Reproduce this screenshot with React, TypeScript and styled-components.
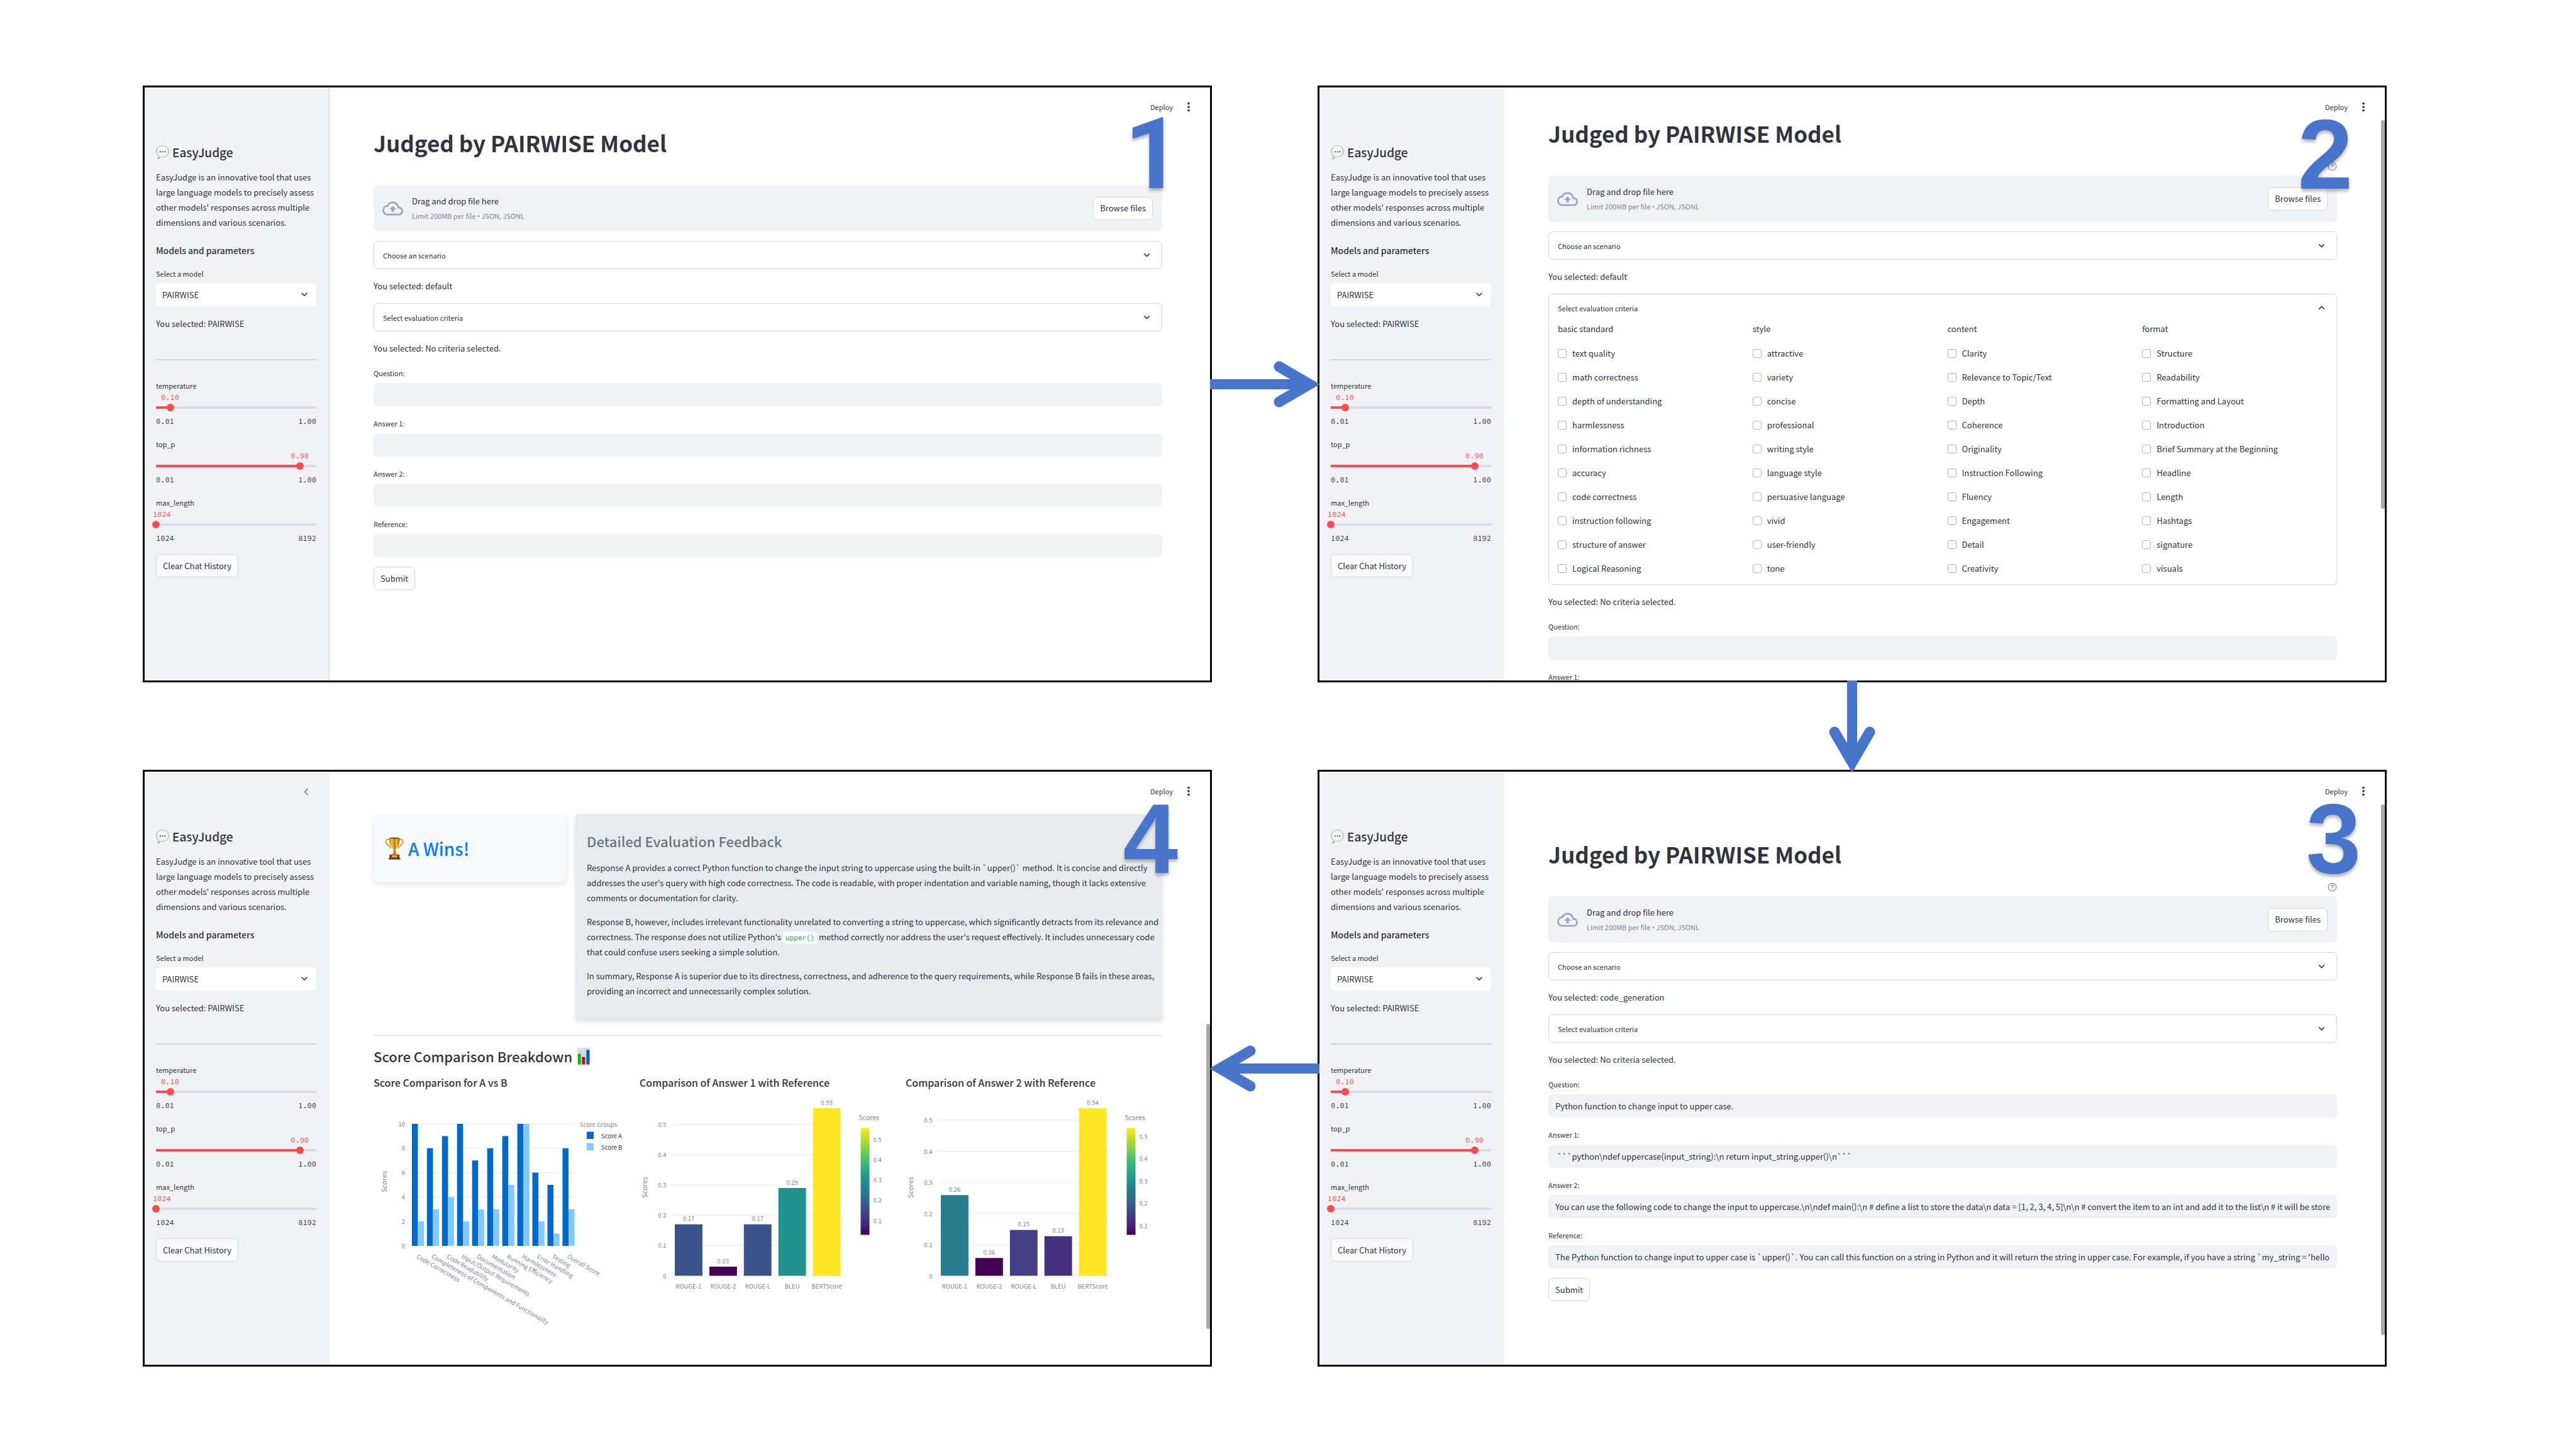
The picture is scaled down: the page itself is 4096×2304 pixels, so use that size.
import React, { useId, useState } from 'react';
import styled, { createGlobalStyle } from 'styled-components';
import {
  MdChevronLeft,
  MdExpandLess,
  MdExpandMore,
  MdMoreVert,
  MdOutlineCloudUpload,
} from 'react-icons/md';
import { FiHelpCircle } from 'react-icons/fi';

const sans = "'Noto Sans CJK SC', sans-serif";
const mono = "'Source Code Pro', 'Liberation Mono', monospace";
const ink = '#31333f';
const muted = '#808495';
const line = '#d6d6d9';
const fill = '#f0f2f6';
const accent = '#ff4b4b';
const arrowBlue = '#4874cb';

const GlobalStyle = createGlobalStyle`
  *, *::before, *::after { box-sizing: border-box; }
  body { margin: 0; background: #fff; color: ${ink}; font-family: ${sans}; font-size: 13px; line-height: 24px; }
  h1, h2, h3, h4, p { margin: 0; }
  button, input, select { font: inherit; color: inherit; margin: 0; }
  svg { display: block; flex: none; }
`;

/* ---------- page ---------- */

const Page = styled.main`
  display: grid;
  grid-template-columns: 1fr 168px 1fr;
  grid-template-rows: auto 139px auto;
  padding: 136px 301px 131px 227px;
`;

const ArrowCell = styled.div<{ $column: number; $row: number }>`
  grid-column: ${p => p.$column};
  grid-row: ${p => p.$row};
  display: flex;
  align-items: center;
  justify-content: center;
  z-index: 2;
  svg { overflow: visible; }
`;

const Panel = styled.section<{ $column: number; $row: number }>`
  grid-column: ${p => p.$column};
  grid-row: ${p => p.$row};
  position: relative;
  display: flex;
  min-width: 0;
  aspect-ratio: 1700 / 949;
  overflow: hidden;
  border: 3px solid #000;
  background: #fff;
`;

const StepNumber = styled.div<{ $right: number; $face?: string }>`
  position: absolute;
  top: 28px;
  right: ${p => p.$right}px;
  z-index: 3;
  font: 700 157px/1 ${p => p.$face ?? "'Liberation Sans'"}, Arial, sans-serif;
  color: ${arrowBlue};
  text-shadow: 0 4px 5px rgba(0, 0, 0, 0.3);
`;

const TopBar = styled.div`
  position: absolute;
  top: 20px;
  right: 23px;
  display: flex;
  align-items: center;
  gap: 14px;
`;

const TopButton = styled.button`
  display: flex;
  padding: 0;
  border: 0;
  background: none;
  font-size: 11px;
  line-height: 22px;
`;

const ScrollThumb = styled.div<{ $top: number; $length: number }>`
  position: absolute;
  top: ${p => p.$top}%;
  right: 0;
  width: 6px;
  height: ${p => p.$length}%;
  border-radius: 3px;
  background: #a9a9ad;
`;

/* ---------- sidebar ---------- */

const Side = styled.aside<{ $ruled?: boolean }>`
  position: relative;
  flex: none;
  width: 294px;
  padding: 88px 20px 0 18px;
  background: ${fill};
  border-right: 1px solid ${p => (p.$ruled ? '#d0d1d6' : fill)};
`;

const CollapseButton = styled.button`
  position: absolute;
  top: 21px;
  right: 25px;
  display: flex;
  padding: 0;
  border: 0;
  background: none;
  color: ${muted};
`;

const Brand = styled.h2`
  display: flex;
  align-items: center;
  gap: 5px;
  font-size: 19px;
  font-weight: 500;
  line-height: 30px;
`;

const Intro = styled.p`
  margin-top: 13px;
  white-space: nowrap;
`;

const SideHeading = styled.h3`
  margin-top: 20px;
  font-size: 14px;
  font-weight: 500;
  line-height: 24px;
`;

const FieldLabel = styled.label`
  display: block;
  font-size: 11px;
  line-height: 20px;
`;

const ModelField = styled.div`
  margin-top: 15px;
`;

const SelectShell = styled.div`
  position: relative;
  margin-top: 5px;
  svg { position: absolute; right: 9px; top: 8px; pointer-events: none; }
`;

const Select = styled.select`
  display: block;
  width: 100%;
  height: 37px;
  padding: 0 10px;
  border: 0;
  border-radius: 7px;
  background: #fff;
  appearance: none;
`;

const SideNote = styled.p`
  margin-top: 16px;
`;

const SideRule = styled.hr`
  height: 2px;
  margin: 44px 0 30px;
  border: 0;
  background: ${line};
`;

const Sliders = styled.div`
  display: flex;
  flex-direction: column;
  gap: 16px;
`;

const SliderValue = styled.output<{ $percent: number }>`
  display: block;
  width: 29px;
  margin-left: max(-5px, calc(${p => p.$percent}% - 15px));
  font: 12px/17px ${mono};
  color: ${accent};
`;

const Track = styled.div<{ $percent: number }>`
  height: 16px;
  background:
    linear-gradient(90deg, ${accent} ${p => p.$percent}%, #d9deea ${p => p.$percent}%)
    center / 100% 4px no-repeat;
`;

const Range = styled.input`
  display: block;
  width: calc(100% + 12px);
  height: 16px;
  margin-left: -6px;
  background: none;
  appearance: none;
  &::-webkit-slider-thumb {
    appearance: none;
    width: 12px;
    height: 12px;
    border-radius: 50%;
    background: ${accent};
  }
`;

const Ticks = styled.div`
  display: flex;
  justify-content: space-between;
  padding-top: 4px;
  font: 12px/20px ${mono};
`;

const Button = styled.button`
  display: block;
  height: 37px;
  padding: 0 10px;
  border: 1px solid ${line};
  border-radius: 7px;
  background: #fff;
  white-space: nowrap;
`;

const ClearButton = styled(Button)`
  margin-top: 15px;
  background: #f9f9fb;
`;

/* ---------- main column ---------- */

const Main = styled.div<{ $top: number }>`
  flex: 1;
  min-width: 0;
  padding: ${p => p.$top}px 76px 0 70px;
`;

const Title = styled.h1`
  font-size: 35px;
  font-weight: 700;
  line-height: 49px;
`;

const HelpRow = styled.div`
  display: flex;
  justify-content: flex-end;
  align-items: center;
  height: 22px;
  margin: 17px 0 4px;
  color: ${muted};
`;

const Stack = styled.div`
  display: flex;
  flex-direction: column;
  align-items: stretch;
  gap: 15px;
`;

const DropZone = styled.div`
  display: flex;
  align-items: center;
  gap: 14px;
  height: 74px;
  padding: 0 15px 0 14px;
  border-radius: 7px;
  background: ${fill};
`;

const DropText = styled.div`
  flex: 1;
`;

const DropHint = styled.div`
  font-size: 11px;
  line-height: 22px;
  color: ${muted};
`;

const Bullet = styled.span`
  font-family: 'Open Sans', sans-serif;
`;

const Expander = styled.div`
  border: 1px solid ${line};
  border-radius: 7px;
`;

const ExpanderHead = styled.button`
  display: flex;
  justify-content: space-between;
  align-items: center;
  width: 100%;
  height: 43px;
  padding: 0 14px;
  border: 0;
  background: none;
  font-size: 11px;
`;

const Criteria = styled.div`
  display: grid;
  grid-template-columns: repeat(4, 1fr);
  gap: 15px;
  padding: 0 14px 14px;
`;

const CriteriaGroup = styled.fieldset`
  display: flex;
  flex-direction: column;
  gap: 15px;
  min-width: 0;
  margin: 0;
  padding: 0;
  border: 0;
`;

const GroupName = styled.legend`
  margin-bottom: 15px;
  padding: 0;
  line-height: 24px;
`;

const Check = styled.label`
  display: flex;
  align-items: center;
  gap: 9px;
  line-height: 23px;
`;

const Box = styled.input`
  width: 14px;
  height: 14px;
  border: 1px solid #b3b5bd;
  border-radius: 3px;
  background: #fff;
  appearance: none;
`;

const Field = styled.div`
  label { line-height: 24px; }
`;

const TextInput = styled.input`
  display: block;
  width: 100%;
  height: 37px;
  margin-top: 4px;
  padding: 0 11px;
  border: 0;
  border-radius: 7px;
  background: ${fill};
`;

const SubmitRow = styled.div`
  display: flex;
`;

/* ---------- results ---------- */

const ResultRow = styled.div`
  display: grid;
  grid-template-columns: minmax(0, 307fr) minmax(0, 933fr);
  align-items: start;
  gap: 14px;
`;

const WinnerCard = styled.div`
  display: flex;
  align-items: center;
  gap: 7px;
  height: 109px;
  padding: 0 18px;
  border-radius: 7px;
  background: #f8f9fb;
  box-shadow: 0 4px 7px rgba(0, 0, 0, 0.1);
`;

const WinnerText = styled.h2`
  font-size: 28px;
  font-weight: 500;
  line-height: 36px;
  color: #007bff;
`;

const FeedbackCard = styled.article`
  padding: 26px 18px 33px;
  border-radius: 5px;
  background: #e7ebee;
  box-shadow: 0 4px 7px rgba(0, 0, 0, 0.12);
  p { margin-top: 14px; white-space: nowrap; }
`;

const FeedbackTitle = styled.h2`
  font-size: 22px;
  font-weight: 500;
  line-height: 34px;
  color: #6c757d;
`;

const Code = styled.code`
  padding: 3px 4px;
  border-radius: 4px;
  background: #f8f9fb;
  font: 11px/16px ${mono};
  color: #09ab3b;
`;

const Rule = styled.hr`
  height: 1px;
  margin: 25px 0 16px;
  border: 0;
  background: ${line};
`;

const SectionTitle = styled.h2`
  display: flex;
  align-items: center;
  gap: 8px;
  font-size: 22px;
  font-weight: 500;
  line-height: 32px;
`;

const Charts = styled.div`
  display: grid;
  grid-template-columns: repeat(3, 1fr);
  gap: 15px;
  margin-top: 14px;
`;

const ChartTitle = styled.h3`
  font-size: 16px;
  font-weight: 500;
  line-height: 24px;
  white-space: nowrap;
`;

const ChartSvg = styled.svg`
  width: 100%;
  height: auto;
  margin-top: 4px;
  overflow: visible;
  font-family: ${sans};
  font-size: 19px;
  fill: ${muted};
`;

/* ---------- drawings ---------- */

const SpeechBalloon = () => (
  <svg width="21" height="23" viewBox="10 22 92 100" aria-hidden="true">
    <defs>
      <radialGradient id="balloon" cx="50%" cy="42%" r="60%">
        <stop offset="0" stopColor="#ffffff" />
        <stop offset="0.65" stopColor="#f1f1f1" />
        <stop offset="1" stopColor="#a9a9a9" />
      </radialGradient>
    </defs>
    <path
      d="M56 25c25 0 44 17 44 39s-19 40-44 40c-4 0-8 0-12-1-5 7-13 14-24 15 6-6 9-13 8-22C18 89 12 77 12 64c0-22 19-39 44-39z"
      fill="url(#balloon)" stroke="#a0a0a0" strokeWidth="3"
    />
    <circle cx="40" cy="67" r="4.5" fill="#333" />
    <circle cx="56" cy="67" r="4.5" fill="#333" />
    <circle cx="72" cy="67" r="4.5" fill="#333" />
  </svg>
);

const Trophy = () => (
  <svg width="30" height="36" viewBox="20 33 118 146" aria-hidden="true">
    <defs>
      <linearGradient id="gold" x1="0" x2="1" y1="0" y2="0">
        <stop offset="0" stopColor="#a86a08" />
        <stop offset="0.25" stopColor="#f6cf4e" />
        <stop offset="0.5" stopColor="#b97a0c" />
        <stop offset="0.72" stopColor="#f3c33c" />
        <stop offset="1" stopColor="#8f5705" />
      </linearGradient>
    </defs>
    <path d="M50 50c-12-8-26 0-25 13 1 18 18 22 33 41M110 50c12-8 26 0 25 13-1 18-18 22-33 41" fill="none" stroke="#c98d17" strokeWidth="6" />
    <path d="M47 40h66c1 34-6 58-25 70v14c1 9 9 13 12 22H62c3-9 10-13 11-22v-14C54 98 46 74 47 40z" fill="url(#gold)" />
    <ellipse cx="80" cy="40" rx="33" ry="5" fill="#8a5a0b" />
    <path d="M48 146h64v22H48z" fill="#7a2f12" />
    <path d="M44 168h72l3 9H42z" fill="#5c1f0b" />
    <path d="M62 150h36v14H62z" fill="#e3ae5a" />
  </svg>
);

const BarChartMark = () => (
  <svg width="20" height="27" viewBox="0 0 20 27" aria-hidden="true">
    <rect width="20" height="27" fill="#d4e0ea" />
    <path d="M0 6h20M0 12h20M0 18h20M6 0v27M13 0v27" stroke="#c2d0dd" strokeWidth="0.6" />
    <rect x="1" y="9.5" width="4.6" height="17" fill="#0cb814" />
    <rect x="7.4" y="14.5" width="5" height="12" fill="#c40d0d" />
    <rect x="14.3" y="3.4" width="5.2" height="23.1" fill="#0a5cc4" />
  </svg>
);

/* Points right by default; the other steps turn it. */
const Arrow = ({ length, turn = 0 }: { length: number; turn?: number }) => (
  <svg width={length} height="74" viewBox={`0 0 ${length} 74`} style={{ transform: `rotate(${turn}deg)` }} aria-hidden="true">
    <path d={`M-2 37H${length - 12}`} stroke={arrowBlue} strokeWidth="16" fill="none" />
    <path
      d={`M${length - 62} 9L${length - 14} 37L${length - 62} 65`}
      stroke={arrowBlue} strokeWidth="17" strokeLinecap="round" strokeLinejoin="miter" fill="none"
    />
  </svg>
);

/* ---------- charts (drawn in an 816-unit wide box) ---------- */

const scoreData: [string, number, number][] = [
  ['Code Correctness', 10, 2],
  ['Completeness of Components and Functionality', 8, 3],
  ['Code Readability', 9, 4],
  ['Input/Output Requirements', 10, 2],
  ['Documentation', 7, 3],
  ['Modularity', 8, 3],
  ['Running Efficiency', 9, 5],
  ['Harmlessness', 10, 10],
  ['Error Handling', 6, 2],
  ['Testing', 5, 1],
  ['Overall Score', 8, 3],
];

const GroupedChart = () => {
  const left = 117;
  const right = 644;
  const base = 488;
  const unit = 38.8;
  const band = (right - left) / scoreData.length;
  const bar = band * 0.4;
  return (
    <ChartSvg viewBox="0 0 816 780" role="img" aria-label="Score Comparison for A vs B">
      {[0, 2, 4, 6, 8, 10].map(v => (
        <g key={v}>
          <line x1={left} x2={right} y1={base - v * unit} y2={base - v * unit} stroke="#e6eaf1" strokeWidth="2" />
          <text x="100" y={base - v * unit + 7} textAnchor="end">{v}</text>
        </g>
      ))}
      {scoreData.map(([name, a, b], i) => {
        const x = left + band * i + band * 0.1;
        return (
          <g key={name}>
            <rect x={x} y={base - a * unit} width={bar} height={a * unit} fill="#0068c9" />
            <rect x={x + bar} y={base - b * unit} width={bar} height={b * unit} fill="#83c9ff" />
            <text transform={`translate(${x + bar - 6} ${base + 38}) rotate(30)`}>{name}</text>
          </g>
        );
      })}
      <text transform="translate(42 284) rotate(-90)" textAnchor="middle" fontSize="22">Scores</text>
      <text x="656" y="110">Score Groups</text>
      <rect x="678" y="125" width="22" height="23" fill="#0068c9" />
      <rect x="678" y="161" width="22" height="23" fill="#83c9ff" />
      <text x="724" y="146" fill={ink}>Score A</text>
      <text x="724" y="182" fill={ink}>Score B</text>
    </ChartSvg>
  );
};

const viridis = ['#440154', '#482878', '#3e4989', '#31688e', '#26828e', '#1f9e89', '#35b779', '#6ece58', '#b5de2b', '#fde725'];

interface Bar { name: string; value: number; label: string; color: string }

const ReferenceChart = ({ title, bars, step, barTicks, barStep }: {
  title: string; bars: Bar[]; step: number; barTicks: number; barStep: number;
}) => {
  const gradient = useId();
  const left = 101;
  const right = 650;
  const base = 583;
  const band = (right - left) / bars.length;
  return (
    <ChartSvg viewBox="0 0 816 780" role="img" aria-label={title}>
      <defs>
        <linearGradient id={gradient} x1="0" x2="0" y1="1" y2="0">
          {viridis.map((c, i) => <stop key={c} offset={i / (viridis.length - 1)} stopColor={c} />)}
        </linearGradient>
      </defs>
      {[0, 1, 2, 3, 4, 5].map(v => (
        <g key={v}>
          <line x1={left} x2={right} y1={base - v * step} y2={base - v * step} stroke="#e6eaf1" strokeWidth="2" />
          <text x="85" y={base - v * step + 8} textAnchor="end">{v ? `0.${v}` : '0'}</text>
        </g>
      ))}
      {bars.map((b, i) => {
        const x = left + band * (i + 0.1);
        const height = b.value * 10 * step;
        return (
          <g key={b.name} textAnchor="middle">
            <rect x={x} y={base - height} width={band * 0.8} height={height} fill={b.color} />
            <text x={x + band * 0.4} y={base - height - 11}>{b.label}</text>
            <text x={x + band * 0.4} y={base + 40}>{b.name}</text>
          </g>
        );
      })}
      <text transform="translate(23 302) rotate(-90)" textAnchor="middle" fontSize="22">Scores</text>
      <text x="697" y="87" fontSize="21">Scores</text>
      <rect x="703" y="113" width="28" height="340" fill={`url(#${gradient})`} />
      {[1, 2, 3, 4, 5].map(v => (
        <text key={v} x="743" y={barTicks - (v - 1) * barStep}>{`0.${v}`}</text>
      ))}
    </ChartSvg>
  );
};

/* ---------- shared pieces ---------- */

const Slider = ({ label, min, max, start, step, digits }: {
  label: string; min: number; max: number; start: number; step: number; digits: number;
}) => {
  const id = useId();
  const [value, setValue] = useState(start);
  const percent = ((value - min) / (max - min)) * 100;
  return (
    <div>
      <FieldLabel htmlFor={id}>{label}</FieldLabel>
      <SliderValue $percent={percent} htmlFor={id}>{value.toFixed(digits)}</SliderValue>
      <Track $percent={percent}>
        <Range id={id} type="range" min={min} max={max} step={step} value={value} onChange={e => setValue(Number(e.target.value))} />
      </Track>
      <Ticks><span>{min.toFixed(digits)}</span><span>{max.toFixed(digits)}</span></Ticks>
    </div>
  );
};

const Sidebar = ({ ruled, collapsible }: { ruled?: boolean; collapsible?: boolean }) => {
  const id = useId();
  return (
    <Side $ruled={ruled}>
      {collapsible && <CollapseButton aria-label="Collapse sidebar"><MdChevronLeft size={22} /></CollapseButton>}
      <Brand><SpeechBalloon />EasyJudge</Brand>
      <Intro>
        EasyJudge is an innovative tool that uses<br />
        large language models to precisely assess<br />
        other models' responses across multiple<br />
        dimensions and various scenarios.
      </Intro>
      <SideHeading>Models and parameters</SideHeading>
      <ModelField>
        <FieldLabel htmlFor={id}>Select a model</FieldLabel>
        <SelectShell>
          <Select id={id} defaultValue="PAIRWISE"><option>PAIRWISE</option></Select>
          <MdExpandMore size={20} />
        </SelectShell>
      </ModelField>
      <SideNote>You selected: PAIRWISE</SideNote>
      <SideRule />
      <Sliders>
        <Slider label="temperature" min={0.01} max={1} start={0.1} step={0.01} digits={2} />
        <Slider label="top_p" min={0.01} max={1} start={0.9} step={0.01} digits={2} />
        <Slider label="max_length" min={1024} max={8192} start={1024} step={8} digits={0} />
      </Sliders>
      <ClearButton>Clear Chat History</ClearButton>
    </Side>
  );
};

const Toolbar = () => (
  <TopBar>
    <TopButton>Deploy</TopButton>
    <TopButton aria-label="Menu"><MdMoreVert size={22} /></TopButton>
  </TopBar>
);

const Uploader = () => (
  <DropZone>
    <MdOutlineCloudUpload size={33} color="#97a6c3" />
    <DropText>
      <div>Drag and drop file here</div>
      <DropHint>Limit 200MB per file <Bullet>•</Bullet> JSON, JSONL</DropHint>
    </DropText>
    <Button>Browse files</Button>
  </DropZone>
);

const criteria: Record<string, string[]> = {
  'basic standard': ['text quality', 'math correctness', 'depth of understanding', 'harmlessness', 'information richness', 'accuracy', 'code correctness', 'instruction following', 'structure of answer', 'Logical Reasoning'],
  style: ['attractive', 'variety', 'concise', 'professional', 'writing style', 'language style', 'persuasive language', 'vivid', 'user-friendly', 'tone'],
  content: ['Clarity', 'Relevance to Topic/Text', 'Depth', 'Coherence', 'Originality', 'Instruction Following', 'Fluency', 'Engagement', 'Detail', 'Creativity'],
  format: ['Structure', 'Readability', 'Formatting and Layout', 'Introduction', 'Brief Summary at the Beginning', 'Headline', 'Length', 'Hashtags', 'signature', 'visuals'],
};

const CriteriaGrid = () => (
  <Criteria>
    {Object.entries(criteria).map(([group, names]) => (
      <CriteriaGroup key={group}>
        <GroupName>{group}</GroupName>
        {names.map(name => <Check key={name}><Box type="checkbox" />{name}</Check>)}
      </CriteriaGroup>
    ))}
  </Criteria>
);

const LabelledInput = ({ label, value }: { label: string; value: string }) => {
  const id = useId();
  return (
    <Field>
      <FieldLabel htmlFor={id}>{label}</FieldLabel>
      <TextInput id={id} type="text" defaultValue={value} />
    </Field>
  );
};

const JudgeForm = ({ top, scenario, open, values = ['', '', '', ''] }: {
  top: number; scenario: string; open?: boolean; values?: string[];
}) => (
  <Main $top={top}>
    <Title>Judged by PAIRWISE Model</Title>
    <HelpRow><FiHelpCircle size={15} /></HelpRow>
    <Stack>
      <Uploader />
      <Expander>
        <ExpanderHead aria-expanded={false}>Choose an scenario<MdExpandMore size={19} /></ExpanderHead>
      </Expander>
      <p>You selected: {scenario}</p>
      <Expander>
        <ExpanderHead aria-expanded={!!open}>
          Select evaluation criteria
          {open ? <MdExpandLess size={19} /> : <MdExpandMore size={19} />}
        </ExpanderHead>
        {open && <CriteriaGrid />}
      </Expander>
      <p>You selected: No criteria selected.</p>
      {['Question:', 'Answer 1:', 'Answer 2:', 'Reference:'].map((label, i) => (
        <LabelledInput key={label} label={label} value={values[i]} />
      ))}
      <SubmitRow><Button>Submit</Button></SubmitRow>
    </Stack>
  </Main>
);

const filledValues = [
  'Python function to change input to upper case.',
  ' ```python\\ndef uppercase(input_string):\\n return input_string.upper()\\n```',
  'You can use the following code to change the input to uppercase.\\n\\ndef main():\\n # define a list to store the data\\n data = [1, 2, 3, 4, 5]\\n\\n # convert the item to an int and add it to the list\\n # it will be stored on the list',
  "The Python function to change input to upper case is `upper()`. You can call this function on a string in Python and it will return the string in upper case. For example, if you have a string `my_string = 'hello world'`",
];

const answer1: Bar[] = [
  { name: 'ROUGE-1', value: 0.17, label: '0.17', color: '#3a538b' },
  { name: 'ROUGE-2', value: 0.03, label: '0.03', color: '#440154' },
  { name: 'ROUGE-L', value: 0.17, label: '0.17', color: '#3a538b' },
  { name: 'BLEU', value: 0.29, label: '0.29', color: '#22908c' },
  { name: 'BERTScore', value: 0.554, label: '0.55', color: '#fde725' },
];

const answer2: Bar[] = [
  { name: 'ROUGE-1', value: 0.259, label: '0.26', color: '#297b8e' },
  { name: 'ROUGE-2', value: 0.057, label: '0.06', color: '#440154' },
  { name: 'ROUGE-L', value: 0.147, label: '0.15', color: '#423f85' },
  { name: 'BLEU', value: 0.127, label: '0.13', color: '#462f7c' },
  { name: 'BERTScore', value: 0.538, label: '0.54', color: '#fde725' },
];

const Results = () => (
  <Main $top={67}>
    <ResultRow>
      <WinnerCard><Trophy /><WinnerText>A Wins!</WinnerText></WinnerCard>
      <FeedbackCard>
        <FeedbackTitle>Detailed Evaluation Feedback</FeedbackTitle>
        <p>
          Response A provides a correct Python function to change the input string to uppercase using the built-in `upper()` method. It is concise and directly<br />
          addresses the user's query with high code correctness. The code is readable, with proper indentation and variable naming, though it lacks extensive<br />
          comments or documentation for clarity.
        </p>
        <p>
          Response B, however, includes irrelevant functionality unrelated to converting a string to uppercase, which significantly detracts from its relevance and<br />
          correctness. The response does not utilize Python's <Code>upper()</Code> method correctly nor address the user's request effectively. It includes unnecessary code<br />
          that could confuse users seeking a simple solution.
        </p>
        <p>
          In summary, Response A is superior due to its directness, correctness, and adherence to the query requirements, while Response B fails in these areas,<br />
          providing an incorrect and unnecessarily complex solution.
        </p>
      </FeedbackCard>
    </ResultRow>
    <Rule />
    <SectionTitle>Score Comparison Breakdown<BarChartMark /></SectionTitle>
    <Charts>
      <div>
        <ChartTitle>Score Comparison for A vs B</ChartTitle>
        <GroupedChart />
      </div>
      <div>
        <ChartTitle>Comparison of Answer 1 with Reference</ChartTitle>
        <ReferenceChart title="Comparison of Answer 1 with Reference" bars={answer1} step={96.2} barTicks={415} barStep={64.5} />
      </div>
      <div>
        <ChartTitle>Comparison of Answer 2 with Reference</ChartTitle>
        <ReferenceChart title="Comparison of Answer 2 with Reference" bars={answer2} step={99} barTicks={431} barStep={71} />
      </div>
    </Charts>
  </Main>
);

export default function App() {
  return (
    <>
      <GlobalStyle />
      <Page>
        <Panel $column={1} $row={1}>
          <Sidebar ruled />
          <JudgeForm top={63} scenario="default" />
          <Toolbar />
          <StepNumber $right={46} $face="Roboto">1</StepNumber>
        </Panel>
        <ArrowCell $column={2} $row={1}><Arrow length={170} /></ArrowCell>
        <Panel $column={3} $row={1}>
          <Sidebar />
          <JudgeForm top={48} scenario="default" open />
          <Toolbar />
          <ScrollThumb $top={5.5} $length={65.5} />
          <StepNumber $right={51}>2</StepNumber>
        </Panel>
        <ArrowCell $column={3} $row={2}><Arrow length={142} turn={90} /></ArrowCell>
        <Panel $column={3} $row={3}>
          <Sidebar />
          <JudgeForm top={106} scenario="code_generation" values={filledValues} />
          <Toolbar />
          <ScrollThumb $top={5.5} $length={89.5} />
          <StepNumber $right={38}>3</StepNumber>
        </Panel>
        <ArrowCell $column={2} $row={3}><Arrow length={170} turn={180} /></ArrowCell>
        <Panel $column={1} $row={3}>
          <Sidebar collapsible />
          <Results />
          <Toolbar />
          <ScrollThumb $top={42.5} $length={51.5} />
          <StepNumber $right={51}>4</StepNumber>
        </Panel>
      </Page>
    </>
  );
}
